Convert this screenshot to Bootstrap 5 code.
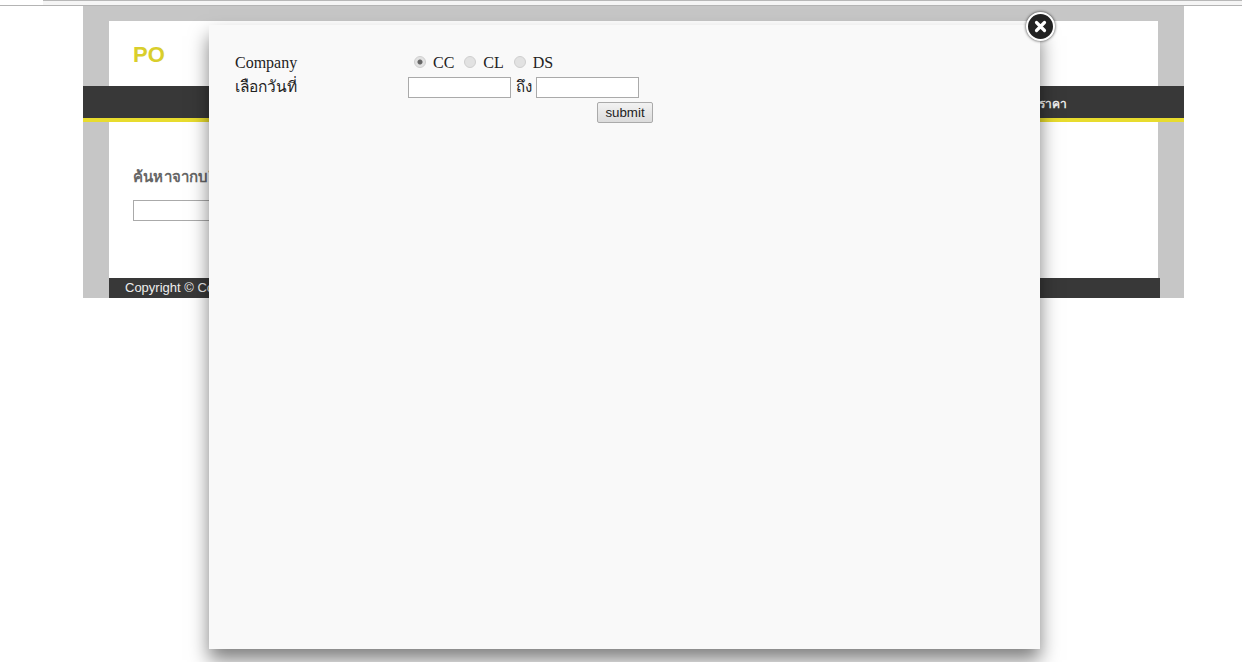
<!doctype html>
<html lang="th">
    <head>
        <meta charset="UTF-8" />
        <meta name="viewport" content="width=device-width, initial-scale=1.0" />
        <title>PO</title>
        <link
            href="https://cdn.jsdelivr.net/npm/bootstrap@5.3.0/dist/css/bootstrap.min.css"
            rel="stylesheet"
        />
        <style>
            body {
                background: #fff;
                height: 662px;
                overflow: hidden;
                font-family: "Liberation Sans", "Noto Sans", sans-serif;
            }
            .top-strip {
                height: 6px;
                background: #fff;
                border-bottom: 1px solid #b4b4b4;
            }
            .top-strip-inner {
                height: 5px;
                margin-left: 43px;
                background: #f5f5f5;
                border-top: 1px solid #b8b8b8;
            }
            .page-wrap {
                width: 1101px;
                height: 292px;
                margin-left: 83px;
                padding-top: 15px;
                background: #c6c6c6;
            }
            .page-head {
                width: 1049px;
                height: 65px;
                margin-left: 26px;
                padding: 21px 24px 0;
                background: #fff;
            }
            .logo-text {
                font-size: 22px;
                line-height: 26px;
                font-weight: 700;
                color: #d9ce2c;
            }
            .page-menu {
                height: 36px;
                padding: 10px 117px 0 0;
                background: #383838;
                border-bottom: 4px solid #e8dc2e;
                color: #eee;
                font-size: 12px;
                line-height: 16px;
                font-weight: 700;
            }
            .page-body {
                width: 1049px;
                height: 156px;
                margin-left: 26px;
                padding: 45px 24px 0;
                background: #fff;
            }
            .search-title {
                font-size: 15px;
                letter-spacing: 0.2px;
                line-height: 20px;
                font-weight: 700;
                color: #666;
                margin-bottom: 13px;
            }
            .search-box {
                display: block;
                width: 240px;
                height: 21px;
                border: 1px solid #aaa;
                background: #fff;
            }
            .page-foot {
                width: 1051px;
                height: 20px;
                margin-left: 26px;
                padding-left: 16px;
                background: #383838;
                color: #eee;
                font-size: 13px;
                line-height: 20px;
            }
            .modal-sheet {
                left: 209px;
                top: 25px;
                width: 831px;
                height: 624px;
                padding: 26px 26px;
                background: #f9f9f9;
                box-shadow: 0 11px 18px rgba(0, 0, 0, 0.5);
                font-family: "Liberation Serif", "Noto Sans", serif;
                font-size: 16px;
                line-height: 24px;
                color: #222;
            }
            .close-dot {
                left: 1026px;
                top: 12px;
                width: 29px;
                height: 29px;
                border-radius: 50%;
                background: #222;
                border: 2px solid #fff;
                box-shadow: 0 0 3px rgba(0, 0, 0, 0.8);
            }
            .form-label-col {
                width: 173px;
            }
            .thai-text {
                font-size: 15.5px;
            }
            .radio-dot {
                appearance: none;
                width: 12px;
                height: 12px;
                margin: -2px 7px 0 6px;
                border-radius: 50%;
                border: 1px solid #cfcfcf;
                background: #e2e2e2;
            }
            .radio-dot + span {
                margin-right: 4px;
            }
            .radio-dot:checked {
                background: radial-gradient(circle, #666 0 2px, #e2e2e2 3px);
            }
            .date-box {
                width: 103px;
                height: 21px;
                padding: 0;
                border: 1px solid #aaa;
                background: #fff;
            }
            .to-label {
                margin: 0 4px 0 5px;
                font-size: 15px;
            }
            .submit-btn {
                width: 56px;
                height: 21px;
                padding: 0;
                border: 1px solid #aaa;
                border-radius: 2px;
                background: linear-gradient(#f2f2f2, #dcdcdc);
                font-family: "Liberation Sans", sans-serif;
                font-size: 13.3px;
                line-height: 17px;
                color: #222;
            }
            .submit-row {
                width: 245px;
                margin-top: 1px;
            }
        </style>
    </head>
    <body class="m-0 position-relative">
        <div class="top-strip"><div class="top-strip-inner"></div></div>

        <!-- Page behind the popup -->
        <div class="page-wrap">
            <div class="page-head">
                <div class="logo-text">PO</div>
            </div>
            <div class="page-menu d-flex justify-content-end">ราคา</div>
            <div class="page-body">
                <div class="search-title">ค้นหาจากบริษัท</div>
                <input type="text" class="search-box" />
            </div>
            <div class="page-foot">Copyright © Company</div>
        </div>

        <!-- Popup -->
        <div class="modal-sheet position-absolute">
            <div class="d-flex align-items-center">
                <div class="form-label-col">Company</div>
                <input type="radio" name="company" class="radio-dot" checked /><span>CC</span>
                <input type="radio" name="company" class="radio-dot" /><span>CL</span>
                <input type="radio" name="company" class="radio-dot" /><span>DS</span>
            </div>
            <div class="d-flex align-items-center">
                <div class="form-label-col thai-text">เลือกวันที่</div>
                <input type="text" class="date-box" />
                <span class="to-label">ถึง</span>
                <input type="text" class="date-box" />
            </div>
            <div class="d-flex">
                <div class="form-label-col"></div>
                <div class="submit-row text-end">
                    <button type="button" class="submit-btn">submit</button>
                </div>
            </div>
        </div>

        <div class="close-dot position-absolute d-flex align-items-center justify-content-center">
            <svg width="13" height="13" viewBox="0 0 13 13">
                <path d="M2.5 2.5 10.5 10.5M10.5 2.5 2.5 10.5" stroke="#fff" stroke-width="3.2" stroke-linecap="round" />
            </svg>
        </div>

        <script src="https://cdn.jsdelivr.net/npm/bootstrap@5.3.0/dist/js/bootstrap.bundle.min.js"></script>
    </body>
</html>
